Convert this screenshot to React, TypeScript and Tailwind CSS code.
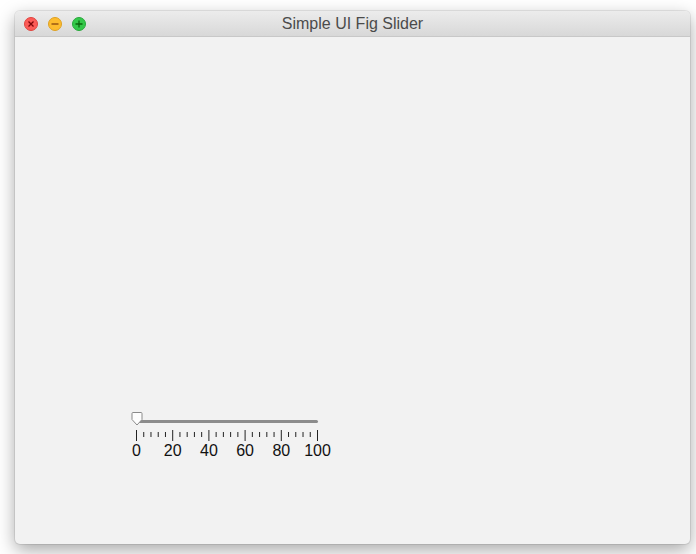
const MAJOR = [0, 20, 40, 60, 80, 100]

function TrafficLights() {
  return (
    <div className="flex items-center gap-[10px] pl-[9px]">
      <div className="w-[14px] h-[14px] rounded-full bg-[#fc5b57] border border-[#e0443e] flex items-center justify-center">
        <svg width="8" height="8" viewBox="0 0 8 8">
          <path d="M1.5 1.5L6.5 6.5M6.5 1.5L1.5 6.5" stroke="#7e0508" strokeWidth="1.3" />
        </svg>
      </div>
      <div className="w-[14px] h-[14px] rounded-full bg-[#fdbc2e] border border-[#dea123] flex items-center justify-center">
        <svg width="8" height="8" viewBox="0 0 8 8">
          <path d="M0.5 4H7.5" stroke="#985712" strokeWidth="1.4" />
        </svg>
      </div>
      <div className="w-[14px] h-[14px] rounded-full bg-[#34c84a] border border-[#27a83a] flex items-center justify-center">
        <svg width="8" height="8" viewBox="0 0 8 8">
          <path d="M0.5 4H7.5M4 0.5V7.5" stroke="#0b650d" strokeWidth="1.3" />
        </svg>
      </div>
    </div>
  )
}

function FigSlider() {
  const width = 181
  const step = width / 25
  const ticks = Array.from({ length: 26 }, (_, i) => i)
  return (
    <div className="relative w-[220px] h-[50px]">
      {/* track */}
      <div className="absolute left-[5px] top-[8px] w-[182px] h-[3px] bg-[#8c8c8c] rounded-sm" />
      {/* thumb */}
      <svg className="absolute left-[0px] top-[0px]" width="12" height="14" viewBox="0 0 12 14">
        <path
          d="M1 1.5Q1 0.5 2 0.5H10Q11 0.5 11 1.5V7.5L6 13L1 7.5Z"
          fill="#fdfdfd"
          stroke="#8a8a8a"
          strokeWidth="1"
        />
      </svg>
      {/* ticks */}
      <svg className="absolute left-[0px] top-[17px]" width="200" height="14" viewBox="0 0 200 14">
        {ticks.map((i) => {
          const x = 5.5 + i * step
          const major = i % 5 === 0
          return (
            <line
              key={i}
              x1={x}
              x2={x}
              y1={major ? 1 : 3}
              y2={major ? 12 : 8}
              stroke="#222"
              strokeWidth="1"
            />
          )
        })}
      </svg>
      {/* labels */}
      {MAJOR.map((v, i) => (
        <span
          key={v}
          className="absolute top-[30px] text-[16px] leading-[18px] text-[#111] font-['Liberation_Sans',Arial,sans-serif] -translate-x-1/2"
          style={{ left: `${5.5 + i * 5 * step}px` }}
        >
          {v}
        </span>
      ))}
    </div>
  )
}

export default function App() {
  return (
    <div className="w-[696px] h-[554px] bg-white pt-[11px] pl-[15px] overflow-hidden">
      <div className="w-[675px] h-[533px] rounded-[5px] bg-[#f2f2f2] flex flex-col overflow-hidden shadow-[0_6px_18px_rgba(0,0,0,0.35),0_0_0_1px_rgba(0,0,0,0.08)]">
        <div className="relative h-[26px] flex items-center bg-gradient-to-b from-[#ececec] to-[#d8d8d8] border-b border-[#c8c8c8]">
          <TrafficLights />
          <div className="absolute inset-0 flex items-center justify-center text-[16px] text-[#4b4b4b] font-['Liberation_Sans',Arial,sans-serif]">
            Simple UI Fig Slider
          </div>
        </div>
        <div className="flex-1 pl-[116px] pt-[375px]">
          <FigSlider />
        </div>
      </div>
    </div>
  )
}
